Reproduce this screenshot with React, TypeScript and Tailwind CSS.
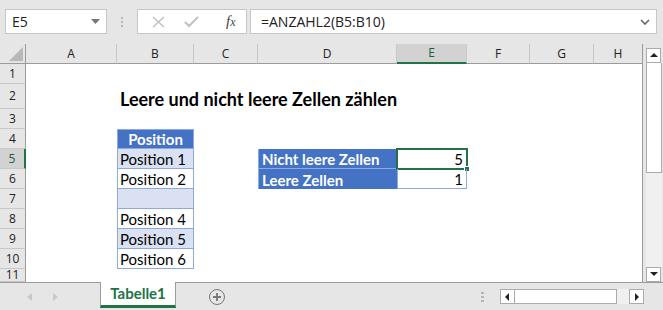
import { Fragment, ReactNode } from "react";

const cols = ["A", "B", "C", "D", "E", "F", "G", "H"];

interface Row {
  n: number;
  b?: { text: string; kind: "title" | "head" | "light" | "white" };
  d?: string;
  e?: string;
}

const rows: Row[] = [
  { n: 1 },
  { n: 2, b: { text: "Leere und nicht leere Zellen zählen", kind: "title" } },
  { n: 3 },
  { n: 4, b: { text: "Position", kind: "head" } },
  { n: 5, b: { text: "Position 1", kind: "light" }, d: "Nicht leere Zellen", e: "5" },
  { n: 6, b: { text: "Position 2", kind: "white" }, d: "Leere Zellen", e: "1" },
  { n: 7, b: { text: "", kind: "light" } },
  { n: 8, b: { text: "Position 4", kind: "white" } },
  { n: 9, b: { text: "Position 5", kind: "light" } },
  { n: 10, b: { text: "Position 6", kind: "white" } },
  { n: 11 },
];

const bClass = {
  title: "overflow-visible whitespace-nowrap font-bold text-[18px] pl-[3px] text-black",
  head: "bg-[#4472c4] text-white font-bold justify-center border-x border-y border-[#8ea9db]",
  light: "bg-[#d9e1f2] pl-[2px] border-x border-b border-[#8ea9db]",
  white: "bg-white pl-[2px] border-x border-b border-[#8ea9db]",
};

function Cell({ className = "", children }: { className?: string; children?: ReactNode }) {
  return <div className={`flex items-end pb-[1px] leading-none ${className}`}>{children}</div>;
}

function TriBtn({ dir }: { dir: "up" | "down" | "left" | "right" }) {
  const pts = {
    up: "1,6 5,2 9,6",
    down: "1,2 5,6 9,2",
    left: "6,1 2,5 6,9",
    right: "3,1 7,5 3,9",
  }[dir];
  return (
    <div className="w-[15px] h-[15px] bg-white border border-[#ababab] flex items-center justify-center">
      <svg width="10" height="10" viewBox="0 0 10 10">
        <polygon points={pts} fill="#222" />
      </svg>
    </div>
  );
}

export default function App() {
  return (
    <div className="w-[663px] h-[310px] bg-[#e6e6e6] flex flex-col overflow-hidden font-['Lato',sans-serif] text-[15px] text-black">
      {/* formula bar */}
      <div className="h-[44px] flex items-start pt-[9px] pl-[5px] pr-[6px] font-['Open_Sans',sans-serif]">
        <div className="w-[102px] h-[25px] bg-white border border-[#c6c6c6] flex items-center justify-between pl-[6px] pr-[6px] text-[14px] text-[#222]">
          <span>E5</span>
          <svg width="9" height="5" viewBox="0 0 9 5">
            <polygon points="0,0 9,0 4.5,5" fill="#777" />
          </svg>
        </div>
        <div className="w-[30px] h-[25px] flex flex-col items-center justify-center gap-[2px]">
          <span className="w-[2px] h-[2px] bg-[#b5b5b5]" />
          <span className="w-[2px] h-[2px] bg-[#b5b5b5]" />
          <span className="w-[2px] h-[2px] bg-[#b5b5b5]" />
        </div>
        <div className="w-[110px] h-[25px] bg-white border border-[#c6c6c6] flex items-center pl-[14px] gap-[19px]">
          <svg width="13" height="12" viewBox="0 0 13 12">
            <path d="M1 1 L12 11 M12 1 L1 11" stroke="#c0c0c0" strokeWidth="1.5" />
          </svg>
          <svg width="15" height="12" viewBox="0 0 15 12">
            <path d="M1 6 L5 10 L14 1" stroke="#c0c0c0" strokeWidth="2" fill="none" />
          </svg>
          <span className="ml-[8px] font-['Liberation_Serif',serif] italic text-[15px] text-[#444]">
            f<span className="text-[12px]">x</span>
          </span>
        </div>
        <div className="ml-[3px] flex-1 h-[25px] bg-white border border-[#c6c6c6] flex items-center justify-between pl-[10px] pr-[6px] text-[14px] text-[#222]">
          <span>=ANZAHL2(B5:B10)</span>
          <svg width="10" height="6" viewBox="0 0 10 6">
            <path d="M1 1 L5 5 L9 1" stroke="#666" strokeWidth="1.6" fill="none" />
          </svg>
        </div>
      </div>

      {/* sheet + vertical scrollbar */}
      <div className="flex h-[238px]">
        <div className="w-[643px] bg-white border-r border-[#9b9b9b] grid grid-cols-[26px_91px_77px_64px_139px_70px_63px_64px_49px] grid-rows-[20px_20px_25px_20px_20px_20px_20px_20px_20px_20px_20px_13px] overflow-hidden">
          {/* header row */}
          <div className="bg-[#e6e6e6] border-r border-b border-[#9b9b9b] flex items-end justify-end p-[2px]">
            <svg width="14" height="14" viewBox="0 0 14 14">
              <polygon points="14,0 14,14 0,14" fill="#b8b8b8" />
            </svg>
          </div>
          {cols.map((c) =>
            c === "E" ? (
              <div key={c} className="bg-[#d2d2d2] border-r border-[#c8c8c8] border-b-2 border-b-[#217346] flex items-center justify-center font-['Open_Sans',sans-serif] text-[12px] text-[#1e5e3a]">
                {c}
              </div>
            ) : (
              <div key={c} className="bg-[#e6e6e6] border-r border-[#c8c8c8] border-b border-b-[#9b9b9b] flex items-center justify-center font-['Open_Sans',sans-serif] text-[12px] text-[#222]">
                {c}
              </div>
            )
          )}

          {rows.map((r) => (
            <Fragment key={r.n}>
              {r.n === 5 ? (
                <div className="bg-[#d2d2d2] border-r-2 border-[#217346] border-b border-b-[#c8c8c8] flex items-center justify-center font-['Open_Sans',sans-serif] text-[12px] text-[#1e5e3a]">
                  {r.n}
                </div>
              ) : (
                <div className="bg-[#e6e6e6] border-r border-[#9b9b9b] border-b border-b-[#c8c8c8] flex items-center justify-center font-['Open_Sans',sans-serif] text-[12px] text-[#222]">
                  {r.n}
                </div>
              )}
              <Cell />
              {r.b ? <Cell className={bClass[r.b.kind]}>{r.b.text}</Cell> : <Cell />}
              <Cell />
              {r.d ? (
                <Cell className={`bg-[#4472c4] text-white font-bold pl-[3px] border-l border-[#8ea9db] ${r.n === 5 ? "border-b" : ""}`}>
                  {r.d}
                </Cell>
              ) : (
                <Cell />
              )}
              {r.e ? (
                <div className="relative">
                  <Cell className="h-full justify-end pr-[3px] border-x border-b border-[#8ea9db]">{r.e}</Cell>
                  {r.n === 5 && (
                    <>
                      <div className="absolute -left-[1px] -top-[1px] -right-[1px] -bottom-[1px] border-2 border-[#217346]" />
                      <div className="absolute -right-[3px] -bottom-[3px] w-[6px] h-[6px] bg-[#217346] border border-white" />
                    </>
                  )}
                </div>
              ) : (
                <Cell />
              )}
              <Cell />
              <Cell />
              <Cell />
            </Fragment>
          ))}
        </div>

        {/* vertical scrollbar */}
        <div className="flex-1 flex flex-col pl-[3px] pr-[1px] pt-[4px]">
          <TriBtn dir="up" />
          <div className="flex-1 bg-[#f0f0f0] flex flex-col">
            <div className="h-[110px] bg-white border-x border-b border-[#ababab]" />
          </div>
          <TriBtn dir="down" />
        </div>
      </div>

      {/* tab bar */}
      <div className="flex-1 border-t border-[#9b9b9b] flex items-start">
        <div className="w-[100px] h-[27px] flex items-center pl-[27px] gap-[21px]">
          <svg width="5" height="8" viewBox="0 0 5 8">
            <polygon points="5,0 0,4 5,8" fill="#c8c8c8" />
          </svg>
          <svg width="5" height="8" viewBox="0 0 5 8">
            <polygon points="0,0 5,4 0,8" fill="#c8c8c8" />
          </svg>
        </div>
        <div className="-mt-px w-[76px] h-[26px] bg-white border-x border-[#9b9b9b] border-b-[3px] border-b-[#217346] flex items-center justify-center font-bold text-[15px] text-[#217346]">
          Tabelle1
        </div>
        <div className="ml-[33px] mt-[6px] w-[16px] h-[16px] rounded-full border-[1.5px] border-[#777] flex items-center justify-center">
          <svg width="10" height="10" viewBox="0 0 10 10">
            <path d="M5 1 V9 M1 5 H9" stroke="#777" strokeWidth="1.8" />
          </svg>
        </div>
        <div className="ml-[256px] mt-[9px] flex flex-col gap-[2px]">
          <span className="w-[3px] h-[2px] bg-[#b5b5b5]" />
          <span className="w-[3px] h-[2px] bg-[#b5b5b5]" />
          <span className="w-[3px] h-[2px] bg-[#b5b5b5]" />
        </div>
        <div className="ml-[16px] mt-[6px] flex">
          <TriBtn dir="left" />
          <div className="w-[102px] h-[15px] bg-white border-y border-r border-[#ababab]" />
          <div className="w-[12px] h-[15px] bg-[#f0f0f0]" />
          <TriBtn dir="right" />
        </div>
      </div>
    </div>
  );
}
